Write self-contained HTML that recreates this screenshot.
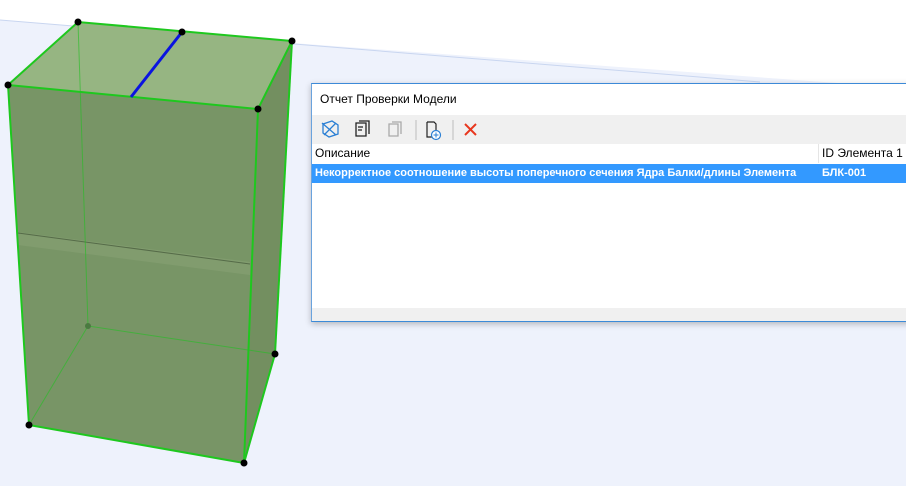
<!DOCTYPE html>
<html><head><meta charset="utf-8"><style>
body{margin:0;width:906px;height:486px;overflow:hidden;position:relative;font-family:"Segoe UI","Liberation Sans",sans-serif;background:#fff}
svg{position:absolute;left:0;top:0}
.dlg{position:absolute;left:311px;top:83px;width:600px;height:237px;background:#fff;border-top:1px solid #3c8ad8;border-left:1px solid #6aa3dd;border-bottom:1px solid #3c8ad8;box-shadow:0 2px 6px rgba(0,0,0,.25)}
.title{position:absolute;left:8px;top:8px;font-size:12px;color:#000}
.tb{position:absolute;left:0;top:31px;width:100%;height:29px;background:#f0f0f0}
.hdr{position:absolute;left:0;top:60px;width:100%;height:19px;font-size:12px}
.row{position:absolute;left:0;top:80px;width:100%;height:19px;background:#3399ff;color:#fff;font-weight:bold;font-size:11px}
.bot{position:absolute;left:0;top:224px;width:100%;height:13px;background:#f0f0f0}
</style></head><body>
<svg width="906" height="486">
<polygon points="0,20 292,43 906,88 906,486 0,486" fill="#eef2fc"/>
<line x1="0" y1="20" x2="760" y2="82" stroke="#c9d6f0" stroke-width="1"/>
<polygon points="258,109 292,41 275,354 244,463" fill="#738f60"/>
<polygon points="8,85 258,109 244,463 29,425" fill="#789566"/>
<polygon points="8,85 78,22 292,41 258,109" fill="#96b582"/>
<polygon points="18,232 250,262 250,275 18,245" fill="#84a072" opacity=".7"/>
<line x1="18" y1="233" x2="250" y2="264" stroke="#556b48" stroke-width="1"/>
<g stroke="#22c022" fill="none" stroke-width="1" opacity=".6">
<polyline points="78,22 88,326 275,354"/><line x1="88" y1="326" x2="29" y2="425"/></g>
<g stroke="#1ec81e" fill="none" stroke-width="2">
<polygon points="8,85 78,22 292,41 258,109"/>
<line x1="8" y1="85" x2="29" y2="425"/><line x1="29" y1="425" x2="244" y2="463"/>
<line x1="244" y1="463" x2="258" y2="109"/><line x1="244" y1="463" x2="275" y2="354"/>
<line x1="275" y1="354" x2="292" y2="41"/></g>
<line x1="182" y1="32" x2="131" y2="97" stroke="#0a14e0" stroke-width="3"/>
<g fill="#000"><circle cx="78" cy="22" r="3.5"/><circle cx="182" cy="32" r="3.5"/><circle cx="292" cy="41" r="3.5"/><circle cx="8" cy="85" r="3.5"/><circle cx="258" cy="109" r="3.5"/><circle cx="275" cy="354" r="3.5"/><circle cx="29" cy="425" r="3.5"/><circle cx="244" cy="463" r="3.5"/></g>
<circle cx="88" cy="326" r="3" fill="#4a7a40"/>
</svg>
<div class="dlg">
<div class="title">Отчет Проверки Модели</div>
<div class="tb">
<svg width="200" height="29" style="position:absolute;left:0;top:0">
<g stroke="#2a7fd4" fill="none" stroke-width="1.3"><path d="M11 9 L20 6 L26 10 L26 19 L17 22 L11 18 Z"/><path d="M10 8 L24 20 M24 8 L12 20"/></g>
<g stroke="#222" fill="none" stroke-width="1.3"><path d="M44 8 H54 V21 H44 Z M47 6 H57 V19"/><path d="M46 12 H51 M46 15 H50"/></g>
<g stroke="#aaa" fill="none" stroke-width="1.3"><path d="M77 9 H86 V21 H77 Z M80 7 H89 V19"/></g>
<line x1="104" y1="5" x2="104" y2="25" stroke="#bbb"/>
<g stroke="#222" fill="none" stroke-width="1.2"><path d="M115 7 H122 L124 9 V16 M115 7 V22 H120"/></g>
<circle cx="124" cy="20" r="4.5" stroke="#2a7fd4" fill="#fff" stroke-width="1.2"/><path d="M124 17.5 V22.5 M121.5 20 H126.5" stroke="#2a7fd4"/>
<line x1="141" y1="5" x2="141" y2="25" stroke="#bbb"/>
<path d="M153 9 L164 20 M164 9 L153 20" stroke="#e8371e" stroke-width="2"/>
</svg></div>
<div class="hdr"><span style="position:absolute;left:3px;top:2px">Описание</span><span style="position:absolute;left:506px;top:0;height:19px;border-left:1px solid #e5e5e5"></span><span style="position:absolute;left:510px;top:2px">ID Элемента 1</span></div>
<div class="row"><span style="position:absolute;left:3px;top:3px">Некорректное соотношение высоты поперечного сечения Ядра Балки/длины Элемента</span><span style="position:absolute;left:510px;top:3px">БЛК-001</span></div>
<div class="bot"></div>
</div>
</body></html>
